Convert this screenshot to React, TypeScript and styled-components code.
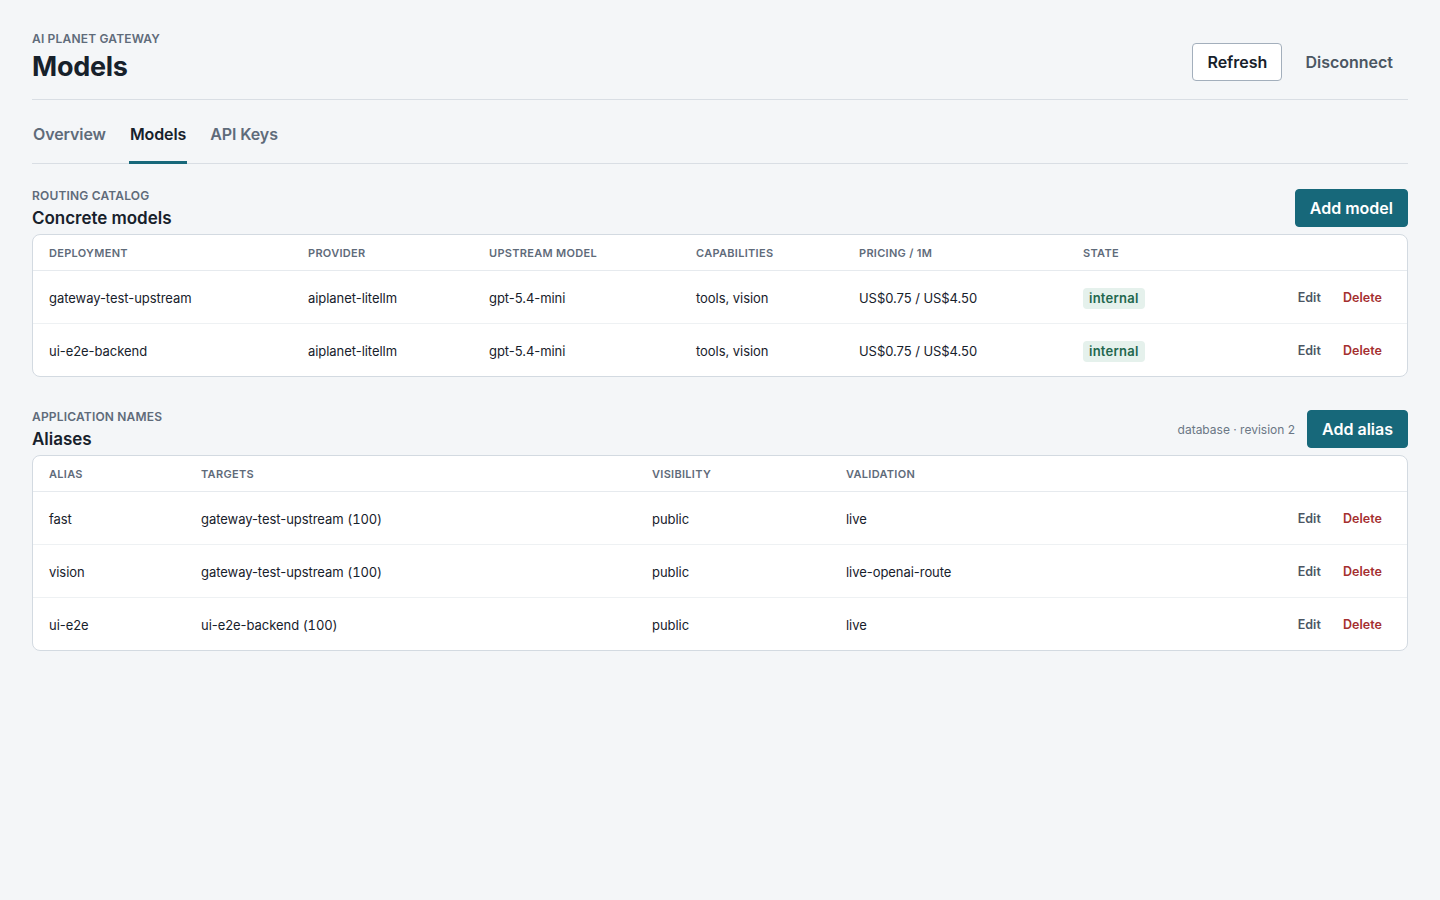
import React from "react";
import styled, { createGlobalStyle } from "styled-components";

const Global = createGlobalStyle`
  html, body { margin: 0; padding: 0; background: #f4f6f8; }
  body { font-family: Inter, "Liberation Sans", sans-serif; color: #17212b; }
  * { box-sizing: border-box; }
`;

const Page = styled.main`
  padding: 32px 32px 0;
  min-height: 900px;
`;

const Header = styled.header`
  display: flex;
  justify-content: space-between;
  align-items: flex-start;
  height: 68px;
  border-bottom: 1px solid #d9dee4;
`;

const Eyebrow = styled.div`
  font-size: 12px;
  line-height: 14px;
  font-weight: 600;
  letter-spacing: 0.18px;
  text-transform: uppercase;
  color: #5f6b7a;
`;

const PageTitle = styled.h1`
  margin: 4px 0 0;
  font-size: 27px;
  line-height: 34px;
  font-weight: 700;
  letter-spacing: -0.27px;
  color: #17212b;
`;

const Actions = styled.div`
  display: flex;
  align-items: center;
  gap: 8px;
  margin-top: 11px;
`;

const Button = styled.button<{ $kind: "primary" | "secondary" | "ghost" }>`
  height: 38px;
  padding: 0 14px;
  border-radius: 4px;
  font: 600 16px/20px Inter, "Liberation Sans", sans-serif;
  border: 1px solid
    ${(p) => (p.$kind === "primary" ? "#17687a" : p.$kind === "secondary" ? "#a3afbc" : "transparent")};
  background: ${(p) => (p.$kind === "primary" ? "#17687a" : p.$kind === "secondary" ? "#ffffff" : "transparent")};
  color: ${(p) => (p.$kind === "primary" ? "#ffffff" : p.$kind === "secondary" ? "#17212b" : "#4b5663")};
`;

const Tabs = styled.nav`
  display: flex;
  gap: 22px;
  height: 64px;
  border-bottom: 1px solid #d9dee4;
`;

const Tab = styled.a<{ $active?: boolean }>`
  display: flex;
  align-items: center;
  height: 64px;
  padding: 6px 1px 0;
  font-size: 16px;
  font-weight: 600;
  letter-spacing: -0.1px;
  color: ${(p) => (p.$active ? "#17212b" : "#5f6b7a")};
  border-bottom: 3px solid ${(p) => (p.$active ? "#17687a" : "transparent")};
`;

const Section = styled.section<{ $first?: boolean }>`
  margin-top: ${(p) => (p.$first ? "25px" : "33px")};
`;

const SectionHead = styled.div`
  display: flex;
  justify-content: space-between;
  align-items: flex-start;
  height: 38px;
  margin-bottom: 7px;
`;

const SectionTitle = styled.h2`
  margin: 5px 0 0;
  font-size: 17px;
  line-height: 20px;
  font-weight: 600;
  letter-spacing: -0.03px;
  color: #17212b;
`;

const HeadRight = styled.div`
  display: flex;
  align-items: center;
  gap: 12px;
`;

const Meta = styled.span`
  font-size: 12px;
  color: #6b7785;
`;

const Card = styled.div`
  background: #fff;
  border: 1px solid #d3dae1;
  border-radius: 8px;
  overflow: hidden;
`;

const Table = styled.table`
  width: 100%;
  border-collapse: collapse;
  table-layout: fixed;
`;

const Th = styled.th`
  height: 35px;
  padding: 2px 16px 0;
  text-align: left;
  font-size: 11px;
  font-weight: 600;
  letter-spacing: 0.3px;
  text-transform: uppercase;
  color: #5f6b7a;
  border-bottom: 1px solid #e6eaee;
`;

const Tr = styled.tr`
  &:not(:last-child) td { border-bottom: 1px solid #eef1f3; }
`;

const Td = styled.td`
  height: 53px;
  padding: 3px 16px 0;
  font-size: 13px;
  letter-spacing: -0.05px;
  color: #17212b;
`;

const Weight = styled.span`
  font-feature-settings: "tnum";
  letter-spacing: -0.15px;
`;

const ActionCell = styled.div`
  display: flex;
  justify-content: flex-end;
  gap: 22px;
  padding-right: 9px;
  position: relative;
  top: -1px;
`;

const LinkButton = styled.a<{ $danger?: boolean }>`
  font-size: 12.5px;
  font-weight: 600;
  letter-spacing: 0.05px;
  color: ${(p) => (p.$danger ? "#a52f2f" : "#4b5663")};
`;

const Badge = styled.span`
  display: inline-block;
  padding: 2px 6px;
  height: 21px;
  line-height: 17px;
  border-radius: 4px;
  font-size: 13px;
  font-weight: 600;
  letter-spacing: 0.25px;
  background: #e5f1ec;
  color: #22674d;
`;

const RowActions = () => (
  <ActionCell>
    <LinkButton>Edit</LinkButton>
    <LinkButton $danger>Delete</LinkButton>
  </ActionCell>
);

const models = [
  ["gateway-test-upstream", "aiplanet-litellm", "gpt-5.4-mini", "tools, vision", "US$0.75 / US$4.50"],
  ["ui-e2e-backend", "aiplanet-litellm", "gpt-5.4-mini", "tools, vision", "US$0.75 / US$4.50"],
];
const aliases = [
  { name: "fast", target: "gateway-test-upstream", validation: "live" },
  { name: "vision", target: "gateway-test-upstream", validation: "live-openai-route" },
  { name: "ui-e2e", target: "ui-e2e-backend", validation: "live" },
];

const modelCols = [259, 181, 207, 163, 224, 140];
const aliasCols = [152, 451, 194, 300];

export default function App() {
  return (
    <Page>
      <Global />
      <Header>
        <div>
          <Eyebrow>AI Planet Gateway</Eyebrow>
          <PageTitle>Models</PageTitle>
        </div>
        <Actions>
          <Button $kind="secondary">Refresh</Button>
          <Button $kind="ghost">Disconnect</Button>
        </Actions>
      </Header>
      <Tabs>
        <Tab>Overview</Tab>
        <Tab $active>Models</Tab>
        <Tab>API Keys</Tab>
      </Tabs>

      <Section $first>
        <SectionHead>
          <div>
            <Eyebrow>Routing catalog</Eyebrow>
            <SectionTitle>Concrete models</SectionTitle>
          </div>
          <Button $kind="primary">Add model</Button>
        </SectionHead>
        <Card>
          <Table>
            <colgroup>
              {modelCols.map((w, i) => (
                <col key={i} width={w} />
              ))}
              <col />
            </colgroup>
            <thead>
              <tr>
                <Th>Deployment</Th>
                <Th>Provider</Th>
                <Th>Upstream model</Th>
                <Th>Capabilities</Th>
                <Th>Pricing / 1M</Th>
                <Th>State</Th>
                <Th />
              </tr>
            </thead>
            <tbody>
              {models.map((r) => (
                <Tr key={r[0]}>
                  {r.map((c, i) => (
                    <Td key={i}>{c}</Td>
                  ))}
                  <Td>
                    <Badge>internal</Badge>
                  </Td>
                  <Td>
                    <RowActions />
                  </Td>
                </Tr>
              ))}
            </tbody>
          </Table>
        </Card>
      </Section>

      <Section>
        <SectionHead>
          <div>
            <Eyebrow>Application names</Eyebrow>
            <SectionTitle>Aliases</SectionTitle>
          </div>
          <HeadRight>
            <Meta>database · revision 2</Meta>
            <Button $kind="primary">Add alias</Button>
          </HeadRight>
        </SectionHead>
        <Card>
          <Table>
            <colgroup>
              {aliasCols.map((w, i) => (
                <col key={i} width={w} />
              ))}
              <col />
            </colgroup>
            <thead>
              <tr>
                <Th>Alias</Th>
                <Th>Targets</Th>
                <Th>Visibility</Th>
                <Th>Validation</Th>
                <Th />
              </tr>
            </thead>
            <tbody>
              {aliases.map((r) => (
                <Tr key={r.name}>
                  <Td>{r.name}</Td>
                  <Td>
                    {r.target} <Weight>(100)</Weight>
                  </Td>
                  <Td>public</Td>
                  <Td>{r.validation}</Td>
                  <Td>
                    <RowActions />
                  </Td>
                </Tr>
              ))}
            </tbody>
          </Table>
        </Card>
      </Section>
    </Page>
  );
}
